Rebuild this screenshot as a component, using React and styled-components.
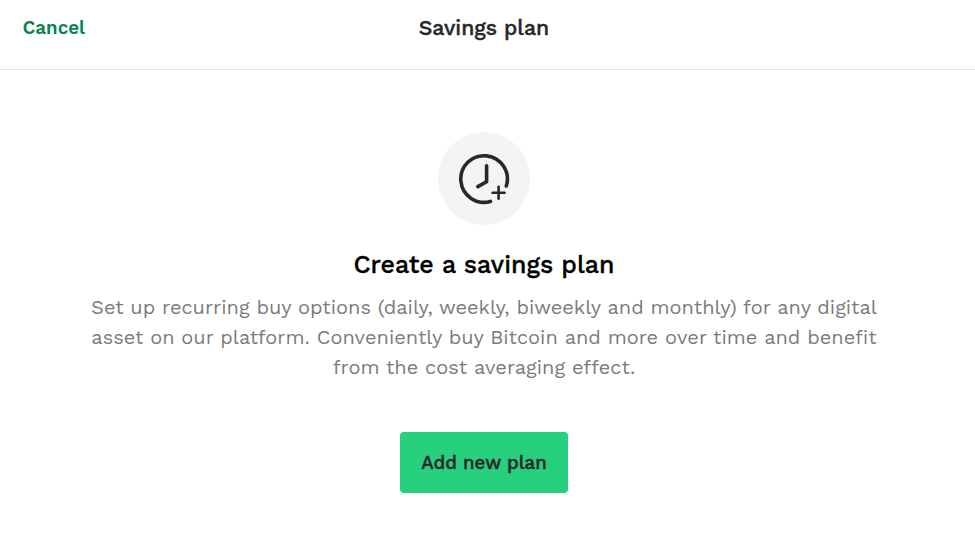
import React from 'react';
import styled, { createGlobalStyle, ThemeProvider } from 'styled-components';

const theme = {
  primary: '#26d07c',
  link: '#0a8452',
  dark: '#282828',
  gray: '#7b7b7b',
  lightGray: '#f3f4f6',
  border: '#e2e2e2',
};

const GlobalStyle = createGlobalStyle`

  * {
    box-sizing: border-box;
  }

  body {
    margin: 0;
    background-color: #fff;
    font-family: 'Work Sans', 'Open Sans', 'Noto Sans', sans-serif;
  }
`;

const Page = styled.div`

  display: flex;
  flex-flow: column;
  height: 553px;
  overflow: hidden;
`;

const Header = styled.header`

  display: grid;
  grid-template-columns: 1fr auto 1fr;
  align-items: center;
  height: 70px;
  padding: 0 29.5px 14px 22.5px;
  border-bottom: 1px solid ${p => p.theme.border};
`;

const CancelButton = styled.button`

  justify-self: start;
  padding: 0;
  color: ${p => p.theme.link};
  background: none;
  border: 0;
  font-family: inherit;
  font-size: 18.75px;
  font-weight: 600;
  line-height: 24px;
  white-space: nowrap;
  cursor: pointer;
`;

const HeaderTitle = styled.h1`

  margin: 0;
  color: ${p => p.theme.dark};
  font-size: 21.25px;
  font-weight: 500;
  line-height: 28px;
  white-space: nowrap;
  -webkit-text-stroke: .4px currentColor;
`;

const Content = styled.main`

  display: flex;
  flex-flow: column;
  align-items: center;
  padding: 62px 7px 0 0;
`;

const IconCircle = styled.div`

  display: flex;
  align-items: center;
  justify-content: center;
  width: 92px;
  height: 93px;
  color: ${p => p.theme.dark};
  background-color: ${p => p.theme.lightGray};
  border-radius: 50%;
`;

const Title = styled.h2`

  margin: 24px 0 0;
  color: #000;
  font-size: 25px;
  font-weight: 500;
  line-height: 32px;
  white-space: nowrap;
  -webkit-text-stroke: .3px currentColor;
`;

const Description = styled.p`

  margin: 11px 0 0;
  color: ${p => p.theme.gray};
  font-size: 20px;
  line-height: 30px;
  text-align: center;
`;

const Line = styled.span`

  display: block;
  white-space: nowrap;
`;

const AddButton = styled.button`

  width: 168px;
  height: 61px;
  margin-top: 50px;
  padding: 0;
  color: ${p => p.theme.dark};
  background-color: ${p => p.theme.primary};
  border: 0;
  border-radius: 4px;
  font-family: inherit;
  font-size: 18.75px;
  font-weight: 500;
  white-space: nowrap;
  cursor: pointer;
  -webkit-text-stroke: .4px currentColor;
`;

function ClockPlusIcon() {
  return (
    <svg width="52" height="51" viewBox="0 0 52 51" fill="none" stroke="currentColor" strokeLinecap="round" strokeLinejoin="round" overflow="visible">
      <path d="M48.3 33A23.3 23.3 0 1 0 32.5 48.4" strokeWidth="3.6" />
      <path d="M28.6 12.7V28.7L19.8 33.6" strokeWidth="3.6" />
      <path d="M40.6 33.8V45.8M34.6 39.8H46.6" strokeWidth="2.6" />
    </svg>
  );
}

function App() {
  return (
    <ThemeProvider theme={theme}>
      <GlobalStyle />
      <Page>
        <Header>
          <CancelButton type="button">Cancel</CancelButton>
          <HeaderTitle>Savings plan</HeaderTitle>
        </Header>
        <Content>
          <IconCircle><ClockPlusIcon /></IconCircle>
          <Title>Create a savings plan</Title>
          <Description>
            <Line>Set up recurring buy options (daily, weekly, biweekly and monthly) for any digital</Line>
            <Line>asset on our platform. Conveniently buy Bitcoin and more over time and benefit</Line>
            <Line>from the cost averaging effect.</Line>
          </Description>
          <AddButton type="button">Add new plan</AddButton>
        </Content>
      </Page>
    </ThemeProvider>
  );
}

export default App;
